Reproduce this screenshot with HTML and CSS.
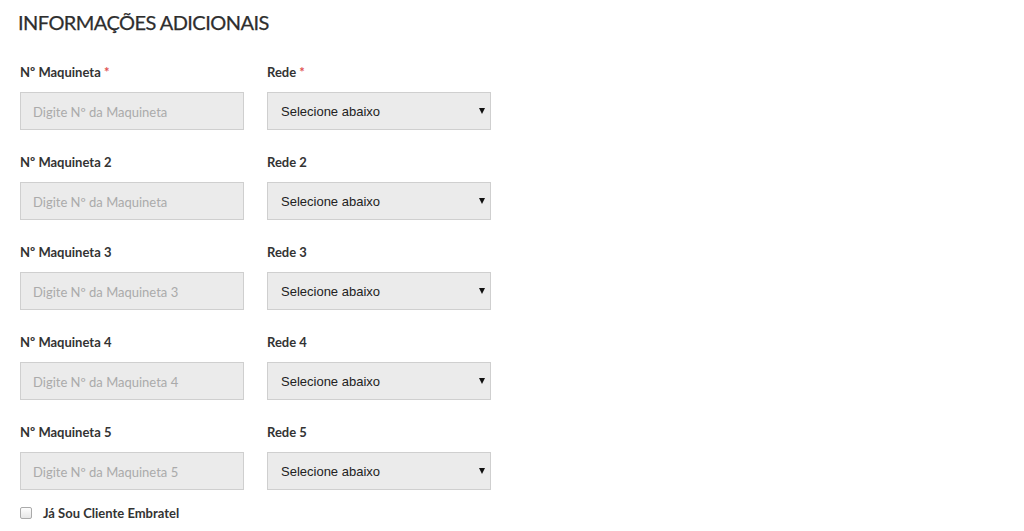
FILE: index.html
```html
<!DOCTYPE html>
<html lang="pt">
<head>
<meta charset="utf-8">
<link rel="stylesheet" href="styles.css">
</head>
<body>
<div class="page">
  <h2 class="title">INFORMAÇÕES ADICIONAIS</h2>
  <div class="grid">
    <div class="field">
      <label class="label">Nº Maquineta <span class="req">*</span></label>
      <input class="input" type="text" placeholder="Digite Nº da Maquineta">
    </div>
    <div class="field">
      <label class="label">Rede <span class="req">*</span></label>
      <div class="select-wrap"><select class="select"><option>Selecione abaixo</option></select></div>
    </div>
    <div class="field">
      <label class="label">Nº Maquineta 2</label>
      <input class="input" type="text" placeholder="Digite Nº da Maquineta">
    </div>
    <div class="field">
      <label class="label">Rede 2</label>
      <div class="select-wrap"><select class="select"><option>Selecione abaixo</option></select></div>
    </div>
    <div class="field">
      <label class="label">Nº Maquineta 3</label>
      <input class="input" type="text" placeholder="Digite Nº da Maquineta 3">
    </div>
    <div class="field">
      <label class="label">Rede 3</label>
      <div class="select-wrap"><select class="select"><option>Selecione abaixo</option></select></div>
    </div>
    <div class="field">
      <label class="label">Nº Maquineta 4</label>
      <input class="input" type="text" placeholder="Digite Nº da Maquineta 4">
    </div>
    <div class="field">
      <label class="label">Rede 4</label>
      <div class="select-wrap"><select class="select"><option>Selecione abaixo</option></select></div>
    </div>
    <div class="field">
      <label class="label">Nº Maquineta 5</label>
      <input class="input" type="text" placeholder="Digite Nº da Maquineta 5">
    </div>
    <div class="field">
      <label class="label">Rede 5</label>
      <div class="select-wrap"><select class="select"><option>Selecione abaixo</option></select></div>
    </div>
  </div>
  <label class="check">
    <span class="box"></span>
    <span class="check-text">Já Sou Cliente Embratel</span>
  </label>
</div>
</body>
</html>
```
FILE: styles.css
```css
* { box-sizing: border-box; }
html, body { margin: 0; padding: 0; background: #fff; }
body { font-family: Lato, "Open Sans", sans-serif; color: #333; }
.page { padding: 9px 20px 0 20px; }
.title {
  margin: 0 0 0 -2px;
  font-size: 20px;
  line-height: 26px;
  font-weight: 400;
  color: #2e2e2e;
  letter-spacing: -0.55px;
  -webkit-text-stroke: 0.25px #2e2e2e;
}
.grid {
  display: grid;
  grid-template-columns: 224px 224px;
  column-gap: 23px;
  row-gap: 23px;
  margin-top: 28px;
}
.field { display: flex; flex-direction: column; }
.label {
  font-size: 13px;
  line-height: 18px;
  font-weight: 700;
  color: #333;
  margin-bottom: 11px;
}
.req { color: #e05050; }
.input {
  height: 38px;
  width: 224px;
  background: #ebebeb;
  border: 1px solid #cfcfcf;
  border-radius: 0;
  padding: 1px 12px 0;
  font-family: Lato, sans-serif;
  font-size: 13px;
  color: #555;
  outline: none;
}
.input::placeholder { color: #aaa; }
.select-wrap { position: relative; width: 224px; height: 38px; }
.select {
  -webkit-appearance: none;
  appearance: none;
  width: 224px;
  height: 38px;
  background: #ebebeb;
  border: 1px solid #cfcfcf;
  border-radius: 0;
  padding: 0 13px;
  font-family: Arial, "Liberation Sans", sans-serif;
  font-size: 13px;
  color: #222;
  outline: none;
}
.select-wrap::after {
  content: "";
  position: absolute;
  right: 6px;
  top: 16px;
  width: 0;
  height: 0;
  border-left: 3.5px solid transparent;
  border-right: 3.5px solid transparent;
  border-top: 6px solid #111;
}
.check {
  display: flex;
  align-items: center;
  margin-top: 14px;
  gap: 11px;
}
.box {
  width: 12px;
  height: 12px;
  border: 1px solid #aaa;
  border-radius: 2px;
  background: linear-gradient(#fdfdfd, #e6e6e6);
}
.check-text { font-size: 13px; font-weight: 700; color: #333; line-height: 18px; }
```
